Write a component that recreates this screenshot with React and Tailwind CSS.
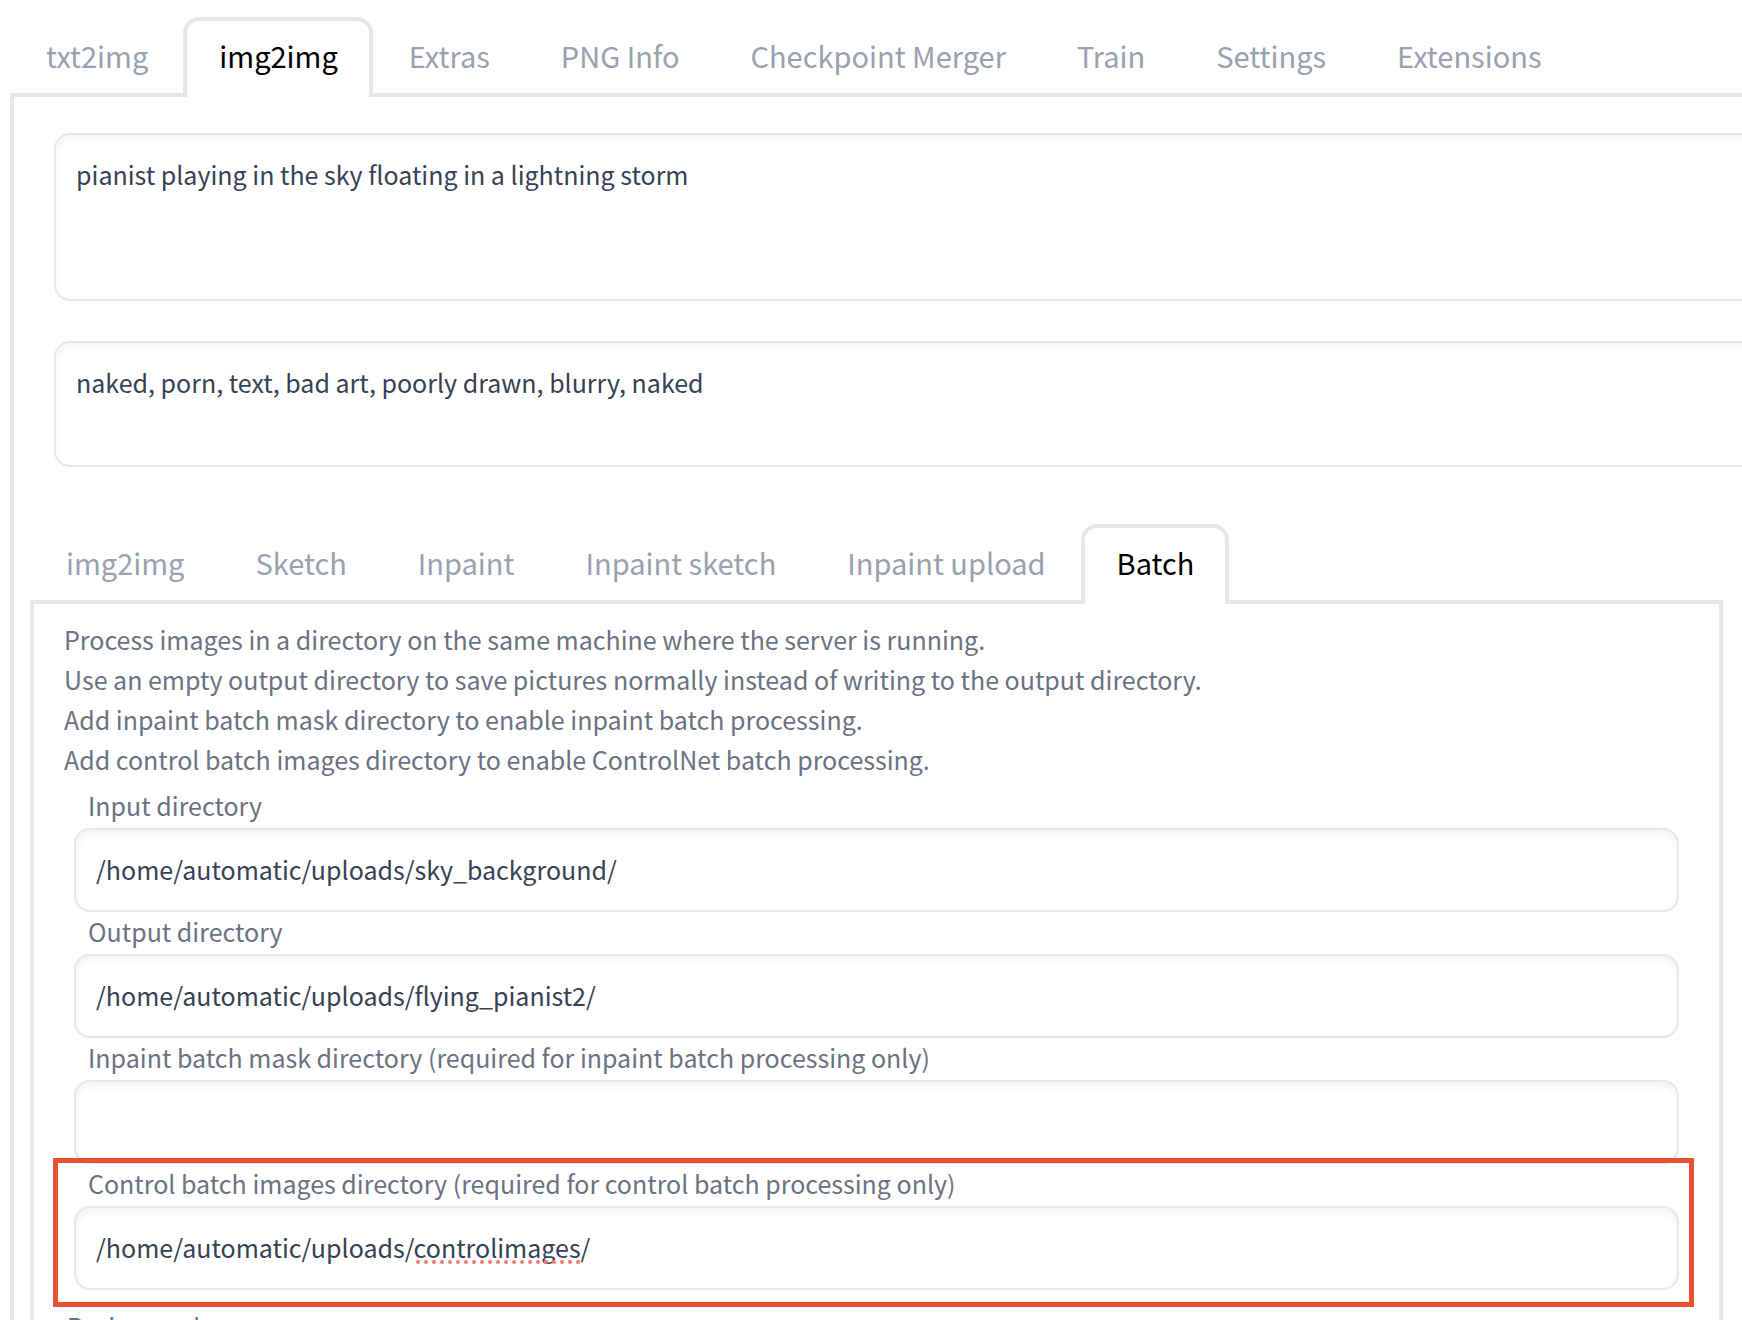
import React, { useId, useState } from "react";

const mainTabs = [
  "txt2img",
  "img2img",
  "Extras",
  "PNG Info",
  "Checkpoint Merger",
  "Train",
  "Settings",
  "Extensions",
];

const modeTabs = ["img2img", "Sketch", "Inpaint", "Inpaint sketch", "Inpaint upload", "Batch"];

const boxStyle =
  "block w-full rounded-2xl border-2 border-gray-200 bg-white px-5 text-[25px] leading-10 text-gray-700 outline-none shadow-[inset_0_4px_8px_0_rgba(0,0,0,0.05)]";

function TabBar({ tabs, initial }) {
  const [active, setActive] = useState(initial);
  return (
    <div role="tablist" className="relative z-10 -mb-1 flex">
      {tabs.map((tab) => (
        <button
          key={tab}
          type="button"
          role="tab"
          aria-selected={tab === active}
          onClick={() => setActive(tab)}
          className={
            tab === active
              ? "h-20 shrink-0 whitespace-nowrap rounded-t-2xl border-4 border-b-0 border-gray-200 bg-white pr-[31px] pb-2 pl-8 text-[29px] leading-10 text-black"
              : "h-20 shrink-0 whitespace-nowrap border-4 border-b-0 border-transparent pr-[31px] pb-2 pl-8 text-[29px] leading-10 text-gray-400"
          }
        >
          {tab}
        </button>
      ))}
    </div>
  );
}

function Field({ label, value, misspelled, highlighted }) {
  const id = useId();
  return (
    <div className="relative">
      <label htmlFor={id} className="block h-[42px] pl-3.5 text-[25px] leading-[38px] text-gray-500">
        {label}
      </label>
      <div className="relative">
        <input id={id} type="text" defaultValue={value} spellCheck={false} className={`${boxStyle} h-21 pb-0.5`} />
        {misspelled && (
          <svg aria-hidden="true" className="absolute top-[54px] left-[342px] h-1 w-[168px]">
            <line x1="2" y1="2" x2="166" y2="2" stroke="#f0786e" strokeWidth="4" strokeLinecap="round" strokeDasharray="0 8" />
          </svg>
        )}
      </div>
      {highlighted && (
        <div className="pointer-events-none absolute -top-1.5 -right-[15px] -bottom-[17px] -left-[21px] border-5 border-[#ea512d]" />
      )}
    </div>
  );
}

export default function App() {
  return (
    <div className="h-screen overflow-hidden bg-white pt-[17px] pl-2.5 font-['Noto_Sans_CJK_SC',sans-serif]">
      <TabBar tabs={mainTabs} initial="img2img" />
      <main className="-mr-4 border-4 border-gray-200 pt-9 pr-[31px] pl-4">
        <div className="-mr-16 flex flex-col gap-10 pl-6">
          <textarea
            aria-label="Prompt"
            spellCheck={false}
            className={`${boxStyle} h-[168px] resize-none overflow-hidden py-[19px]`}
            defaultValue="pianist playing in the sky floating in a lightning storm"
          />
          <textarea
            aria-label="Negative prompt"
            spellCheck={false}
            className={`${boxStyle} h-[126px] resize-none overflow-hidden py-[19px]`}
            defaultValue="naked, porn, text, bad art, poorly drawn, blurry, naked"
          />
        </div>
        <div className="pt-[57px]">
          <TabBar tabs={modeTabs} initial="Batch" />
          <section className="border-4 border-gray-200 px-[30px] pt-[15px] pb-10">
            <p className="text-[25px] leading-10 text-gray-500">
              Process images in a directory on the same machine where the server is running.
              <br />
              Use an empty output directory to save pictures normally instead of writing to the output directory.
              <br />
              Add inpaint batch mask directory to enable inpaint batch processing.
              <br />
              Add control batch images directory to enable ControlNet batch processing.
            </p>
            <div className="px-2.5 pt-[7px]">
              <Field label="Input directory" value="/home/automatic/uploads/sky_background/" />
              <Field label="Output directory" value="/home/automatic/uploads/flying_pianist2/" />
              <Field label="Inpaint batch mask directory (required for inpaint batch processing only)" value="" />
              <Field
                label="Control batch images directory (required for control batch processing only)"
                value="/home/automatic/uploads/controlimages/"
                misspelled
                highlighted
              />
            </div>
            <p className="pt-4 pl-[3px] text-[25px] leading-10 text-gray-500">Resize mode</p>
          </section>
        </div>
      </main>
    </div>
  );
}
